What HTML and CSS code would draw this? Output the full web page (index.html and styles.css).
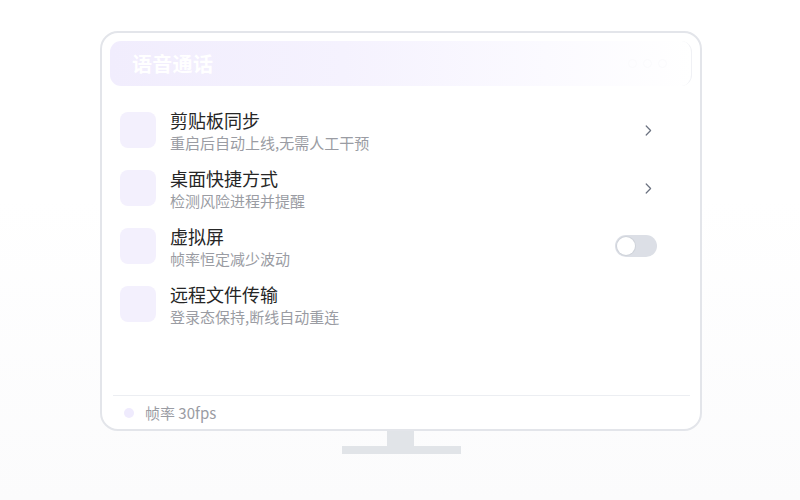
FILE: index.html
```html
<!DOCTYPE html>
<html lang="zh">
<head>
<meta charset="utf-8">
<link rel="stylesheet" href="styles.css">
</head>
<body>
<div class="stage">
  <div class="monitor">
    <div class="header">
      <span class="title">语音通话</span>
      <div class="header-icons">
        <span class="hi"></span><span class="hi"></span><span class="hi"></span>
      </div>
    </div>
    <div class="list">
      <div class="row">
        <div class="icon"></div>
        <div class="text">
          <div class="name">剪贴板同步</div>
          <div class="desc">重启后自动上线,无需人工干预</div>
        </div>
        <div class="action">
          <svg class="chev" width="7" height="11" viewBox="0 0 7 11"><path d="M1.2 1 L5.6 5.5 L1.2 10" fill="none" stroke="#6b7280" stroke-width="1.2" stroke-linecap="round" stroke-linejoin="round"/></svg>
        </div>
      </div>
      <div class="row">
        <div class="icon"></div>
        <div class="text">
          <div class="name">桌面快捷方式</div>
          <div class="desc">检测风险进程并提醒</div>
        </div>
        <div class="action">
          <svg class="chev" width="7" height="11" viewBox="0 0 7 11"><path d="M1.2 1 L5.6 5.5 L1.2 10" fill="none" stroke="#6b7280" stroke-width="1.2" stroke-linecap="round" stroke-linejoin="round"/></svg>
        </div>
      </div>
      <div class="row">
        <div class="icon"></div>
        <div class="text">
          <div class="name">虚拟屏</div>
          <div class="desc">帧率恒定减少波动</div>
        </div>
        <div class="action">
          <div class="toggle"><span class="knob"></span></div>
        </div>
      </div>
      <div class="row">
        <div class="icon"></div>
        <div class="text">
          <div class="name">远程文件传输</div>
          <div class="desc">登录态保持,断线自动重连</div>
        </div>
        <div class="action"></div>
      </div>
    </div>
    <div class="footer">
      <span class="dot"></span>
      <span class="fps">帧率 30fps</span>
    </div>
  </div>
  <div class="neck"></div>
  <div class="base"></div>
</div>
</body>
</html>
```

FILE: styles.css
```css
* { box-sizing: border-box; }
html, body {
  margin: 0;
  height: 100%;
}
body {
  width: 800px;
  height: 500px;
  background: linear-gradient(180deg, #ffffff 0%, #ffffff 40%, #fbfbfc 100%);
  font-family: "Noto Sans CJK SC", "Noto Sans", sans-serif;
  overflow: hidden;
}
.stage {
  display: flex;
  flex-direction: column;
  align-items: center;
  padding-top: 31px;
  padding-left: 2px;
}
.monitor {
  width: 602px;
  height: 400px;
  border: 2px solid #e3e5ea;
  border-radius: 18px;
  background: #ffffff;
  padding: 8px 8px 0 8px;
  display: flex;
  flex-direction: column;
}
.header {
  height: 45px;
  border-radius: 11px;
  background: linear-gradient(90deg, #f1edfd 0%, #f5f2fe 40%, #fbfaff 75%, #ffffff 100%);
  border-right: 1px solid #f0f1f5;
  display: flex;
  align-items: center;
  justify-content: space-between;
  padding: 0 22px 0 22px;
}
.title {
  color: #ffffff;
  font-size: 20px;
  font-weight: 700;
  letter-spacing: 0.3px;
}
.header-icons {
  display: flex;
  gap: 6px;
  margin-right: 2px;
}
.hi {
  width: 9px;
  height: 9px;
  border-radius: 50%;
  border: 1.5px solid #fbfbfd;
}
.list {
  margin-top: 15px;
  flex: 1;
  display: flex;
  flex-direction: column;
}
.row {
  height: 58px;
  display: flex;
  align-items: center;
  padding: 0 35px 0 10px;
}
.icon {
  width: 36px;
  height: 36px;
  border-radius: 8px;
  background: #f3f0fd;
  flex: none;
}
.text {
  margin-left: 14px;
  flex: 1;
  display: flex;
  flex-direction: column;
}
.name {
  font-size: 18px;
  line-height: 26px;
  color: #262626;
}
.desc {
  font-size: 15px;
  line-height: 20px;
  color: #9a9ca3;
}
.action {
  width: 42px;
  display: flex;
  justify-content: flex-end;
  align-items: center;
}
.chev {
  margin-right: 5px;
}
.toggle {
  width: 42px;
  height: 22px;
  border-radius: 11px;
  background: #dcdfe6;
  padding: 2px;
  display: flex;
  align-items: center;
}
.knob {
  width: 18px;
  height: 18px;
  border-radius: 50%;
  background: #ffffff;
  box-shadow: 0 0 0 1px #cfd3da;
}
.footer {
  height: 34px;
  margin: 0 2px 0 3px;
  border-top: 1px solid #eceef2;
  display: flex;
  align-items: center;
  padding-left: 11px;
}
.dot {
  width: 10px;
  height: 10px;
  border-radius: 50%;
  background: #efebfd;
}
.fps {
  margin-left: 11px;
  font-size: 15px;
  color: #9a9ca3;
}
.neck {
  width: 27px;
  height: 15px;
  background: #e1e4e8;
  margin-left: -1px;
}
.base {
  width: 119px;
  height: 8px;
  background: #e1e4e8;
}
```
